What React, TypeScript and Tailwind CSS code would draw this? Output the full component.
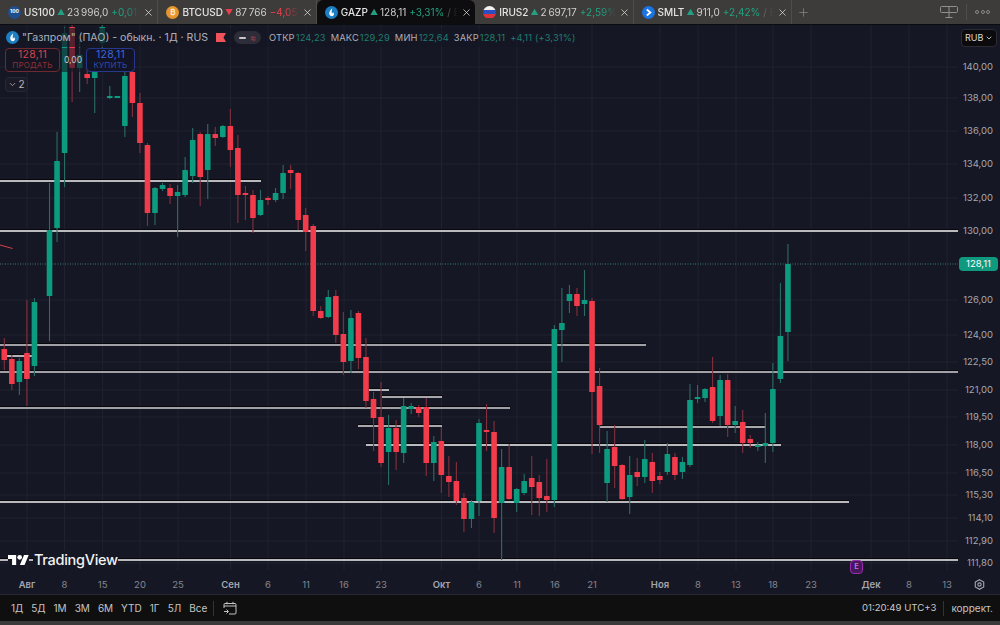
import { ChevronDown, Plus, X } from "lucide-react";

type Candle = [number, "g" | "r", number, number, number, number];

// k, colour, body top, body bottom, wick top, wick bottom (page pixels)
const candles: Candle[] = [
  [0, "r", 349, 360, 338, 370], [1, "r", 359, 384, 355, 390], [2, "g", 361, 382, 358, 395], [3, "r", 353, 379, 300, 406],
  [4, "g", 302, 366, 298, 376], [6, "g", 230, 296, 183, 341], [7, "g", 161, 228, 132, 242], [8, "g", 33, 153, 27, 187],
  [9, "r", 27, 68, 25, 102], [10, "g", 55, 68, 40, 92], [11, "r", 74, 78, 68, 84], [12, "g", 72, 78, 62, 113],
  [13, "g", 27, 43, 25, 50], [14, "g", 96, 97, 86, 99], [15, "g", 96, 97, 96, 98], [16, "g", 76, 126, 70, 137],
  [17, "r", 72, 103, 60, 117], [18, "r", 103, 143, 93, 153], [19, "r", 145, 213, 143, 226], [20, "g", 188, 213, 187, 225],
  [21, "g", 185, 189, 183, 191], [22, "r", 188, 196, 184, 204], [23, "g", 192, 196, 185, 237], [24, "g", 170, 195, 157, 197],
  [25, "g", 140, 176, 128, 183], [26, "r", 134, 177, 132, 206], [27, "g", 134, 170, 124, 199], [28, "r", 134, 138, 127, 146],
  [29, "g", 126, 137, 125, 138], [30, "r", 126, 150, 109, 167], [31, "r", 148, 195, 135, 223], [32, "r", 193, 195, 186, 220],
  [33, "r", 195, 218, 190, 233], [34, "g", 200, 215, 190, 216], [35, "r", 198, 200, 196, 205], [36, "g", 193, 200, 188, 202],
  [37, "g", 173, 193, 165, 199], [38, "r", 170, 173, 165, 189], [39, "r", 173, 220, 172, 230], [40, "r", 215, 232, 208, 251],
  [41, "r", 226, 311, 224, 316], [42, "r", 311, 318, 306, 319], [43, "g", 297, 317, 290, 318], [44, "r", 296, 335, 290, 343],
  [45, "r", 334, 362, 312, 375], [46, "g", 318, 361, 310, 373], [47, "r", 313, 358, 311, 369], [48, "r", 357, 401, 338, 408],
  [49, "r", 399, 418, 392, 451], [50, "r", 417, 463, 382, 467], [51, "g", 428, 452, 415, 485], [52, "r", 428, 452, 420, 470],
  [53, "g", 406, 453, 398, 463], [54, "g", 406, 409, 403, 414], [55, "r", 407, 413, 405, 417], [56, "r", 407, 463, 398, 476],
  [57, "g", 442, 463, 436, 481], [58, "r", 441, 475, 427, 493], [59, "r", 476, 482, 456, 497], [60, "r", 481, 501, 462, 505],
  [61, "r", 498, 519, 493, 532], [62, "g", 502, 519, 500, 528], [63, "g", 423, 501, 419, 516], [64, "r", 430, 431, 404, 451],
  [65, "r", 432, 518, 421, 533], [66, "g", 467, 503, 449, 560], [67, "r", 467, 499, 444, 500], [68, "g", 489, 503, 488, 512],
  [69, "g", 481, 493, 474, 495], [70, "r", 478, 487, 456, 515], [71, "r", 482, 498, 475, 516], [72, "r", 496, 500, 459, 512],
  [73, "g", 329, 500, 325, 507], [74, "g", 323, 330, 288, 362], [75, "g", 294, 301, 285, 313], [76, "r", 294, 306, 288, 316],
  [77, "g", 300, 304, 270, 316], [78, "r", 301, 392, 298, 454], [79, "r", 386, 425, 368, 453], [80, "g", 449, 483, 431, 502],
  [81, "r", 447, 466, 425, 488], [82, "r", 465, 499, 464, 500], [83, "g", 475, 497, 456, 514], [84, "r", 472, 477, 458, 486],
  [85, "g", 459, 477, 440, 483], [86, "r", 462, 481, 453, 493], [87, "r", 476, 480, 472, 484], [88, "g", 454, 472, 443, 475],
  [89, "r", 457, 475, 453, 480], [90, "g", 462, 472, 457, 479], [91, "g", 400, 465, 384, 467], [92, "g", 397, 399, 385, 403],
  [93, "g", 389, 398, 388, 402], [94, "r", 387, 421, 357, 423], [95, "g", 380, 416, 375, 426], [96, "r", 380, 425, 374, 437],
  [97, "g", 421, 425, 406, 433], [98, "r", 422, 443, 410, 453], [99, "r", 439, 443, 435, 448], [100, "g", 445, 446, 442, 451],
  [101, "g", 443, 446, 413, 463], [102, "g", 389, 443, 363, 452], [103, "g", 336, 379, 283, 383], [104, "g", 264, 332, 244, 361],
];

// y, x1, x2, colour of the drawn levels
const levels: [number, number, number, string][] = [
  [181, 0, 261, "#f0f0f0"], [231, 0, 958, "#f0f0f0"], [345, 0, 646, "#cfcfd2"], [356, 7, 32, "#cfcfd2"], [372, 0, 958, "#cfcfd2"],
  [390, 369, 389, "#cfcfd2"], [397, 382, 442, "#d8d8da"], [408, 0, 510, "#cfcfd2"], [426, 358, 442, "#d8d8da"], [427, 600, 766, "#d8d8da"],
  [445, 366, 781, "#f0f0f0"], [502, 0, 849, "#f0f0f0"], [560, 0, 958, "#f0f0f0"],
];

const prices: [string, number][] = [
  ["140,00", 67], ["138,00", 98], ["136,00", 131], ["134,00", 164], ["132,00", 198], ["130,00", 231], ["126,00", 300],
  ["124,00", 335], ["122,50", 362], ["121,00", 390], ["119,50", 417], ["118,00", 445], ["116,50", 473], ["115,30", 495],
  ["114,10", 518], ["112,90", 541], ["111,80", 563],
];

const dates: [string, number, boolean][] = [
  ["Авг", 27, true], ["8", 64.5, false], ["15", 102.7, false], ["20", 140, false], ["25", 178, false], ["Сен", 230.5, true],
  ["6", 268, false], ["11", 306, false], ["16", 344, false], ["23", 381, false], ["Окт", 441.5, true], ["6", 479, false],
  ["11", 517, false], ["16", 555, false], ["21", 592, false], ["Ноя", 660, true], ["8", 698, false], ["13", 736, false],
  ["18", 773, false], ["23", 811, false], ["Дек", 871, true], ["8", 909, false], ["13", 947, false],
];

const tabs = [
  { sym: "US100", up: true, price: "23\u2009996,0", pct: "+0,01%", tail: "", icon: "us" },
  { sym: "BTCUSD", up: false, price: "87\u2009766", pct: "−4,05%", tail: "", icon: "btc" },
  { sym: "GAZP", up: true, price: "128,11", pct: "+3,31%", tail: " / Б", icon: "gaz", active: true },
  { sym: "IRUS2", up: true, price: "2\u2009697,17", pct: "+2,59%", tail: "", icon: "ru" },
  { sym: "SMLT", up: true, price: "911,0", pct: "+2,42%", tail: " / Бе", icon: "smlt" },
];

const ranges = ["1Д", "5Д", "1М", "3М", "6М", "YTD", "1Г", "5Л", "Все"];

function GazIcon({ size = 13 }: { size?: number }) {
  return (
    <svg width={size} height={size} viewBox="0 0 14 14" className="shrink-0">
      <circle cx="7" cy="7" r="7" fill="#1c7fc4" />
      <path d="M7.8 2.5C5.6 4.6 4.4 6.6 4.6 8.4c.2 1.6 1.4 2.6 2.7 2.6 1.4 0 2.4-1 2.4-2.3 0-.9-.5-1.5-1.1-2-.2.7-.6 1.2-1.2 1.4-.5-1.500 0-3.400 .4-5.600z" fill="#fff" />
    </svg>
  );
}

function TabIcon({ kind }: { kind: string }) {
  if (kind === "gaz") return <GazIcon />;
  if (kind === "us")
    return (
      <span className="flex h-[13px] w-[13px] shrink-0 items-center justify-center rounded-full bg-[#1f4e8c] text-[5px] font-bold text-white">
        100
      </span>
    );
  if (kind === "btc")
    return (
      <span className="flex h-[13px] w-[13px] shrink-0 items-center justify-center rounded-full bg-[#e8952c] text-[8px] font-bold text-[#fbe7c8]">
        ₿
      </span>
    );
  if (kind === "ru")
    return (
      <span className="flex h-[13px] w-[13px] shrink-0 flex-col overflow-hidden rounded-full">
        <span className="flex-1 bg-[#f2f2f2]" />
        <span className="flex-1 bg-[#2b4fc0]" />
        <span className="flex-1 bg-[#e0323c]" />
      </span>
    );
  return (
    <svg width="13" height="13" viewBox="0 0 14 14" className="shrink-0">
      <circle cx="7" cy="7" r="7" fill="#1b74e4" />
      <path d="M5.200 3.800 9 7l-3.800 3.200" fill="none" stroke="#fff" strokeWidth="2" />
    </svg>
  );
}

function Tab({ t }: { t: (typeof tabs)[number] }) {
  return (
    <div
      className={`flex h-full w-[158.400px] shrink-0 items-center gap-[3px] pl-2 pr-[3px] ${
        t.active ? "rounded-t-md bg-[#0d0d0f]" : "border-r border-[#4e4d4c]"
      }`}
    >
      <TabIcon kind={t.icon} />
      <div className="flex min-w-0 flex-1 items-center overflow-hidden whitespace-nowrap text-[10px] [mask-image:linear-gradient(to_right,black_88%,transparent)]">
        <span className="mr-[2px] font-medium text-[#e4e4e4]">{t.sym}</span>
        <span className={`mr-[2px] text-[8px] ${t.up ? "text-[#22a081]" : "text-[#e8404e]"}`}>{t.up ? "▲" : "▼"}</span>
        <span className="mr-[3px] text-[#cfcfcf]">{t.price}</span>
        <span className={t.up ? "text-[#22a081]" : "text-[#e8404e]"}>{t.pct}</span>
        <span className="whitespace-pre text-[#777]">{t.tail}</span>
      </div>
      <X size={11} strokeWidth={1.6} className="shrink-0 text-[#e2e2e2]" />
    </div>
  );
}

function TvLogo() {
  return (
    <div className="absolute left-[8px] top-[526px] flex items-center gap-[4px]">
      <svg width="21" height="10.500" viewBox="0 4 36 18" fill="#fff" className="shrink-0 bg-[#161724]">
        <path d="M14 22H7V11H0V4h14v18zM28 22h-8l7.500-18h8L28 22z" />
        <circle cx="20" cy="8" r="4" />
      </svg>
      <span className="bg-[#161724] pl-[1px] text-[14.500px] leading-[18px] font-medium tracking-[-0.3px] text-[#f2f2f2]">
        TradingView
      </span>
    </div>
  );
}

function Chart() {
  return (
    <svg width="958" height="545" viewBox="0 25 958 545" className="block">
      {prices.map(([p, y]) => (
        <line key={p} x1="0" x2="958" y1={y} y2={y} stroke="#20222f" strokeWidth="1" />
      ))}
      {dates.map(([d, x]) => (
        <line key={x} x1={x} x2={x} y1="25" y2="570" stroke="#20222f" strokeWidth="1" />
      ))}
      <line x1="0" x2="958" y1="264" y2="264" stroke="#3f7a70" strokeWidth="1" strokeDasharray="1 1.500" />
      <path d="M0 245 12.500 248.500" stroke="#d8404a" strokeWidth="1" />
      {levels.map(([y, x1, x2, color]) => (
        <g key={`${y}-${x1}`}>
          <line x1={x1} x2={x2} y1={y - 1.500} y2={y - 1.500} stroke="#08080c" strokeWidth="1" />
          <line x1={x1} x2={x2} y1={y} y2={y} stroke={color} strokeWidth="1.700" />
        </g>
      ))}
      {candles.map(([k, c, top, bot, wt, wb]) => {
        const x = 4.3 + 7.535 * k;
        const fill = c === "g" ? "#0d9b80" : "#f23c4c";
        const wick = c === "g" ? "#2b6d66" : "#82303d";
        return (
          <g key={k}>
            <line x1={x} x2={x} y1={wt} y2={wb} stroke={wick} strokeWidth="1.100" />
            <rect x={x - 2.800} y={top} width="5.600" height={Math.max(bot - top, 2)} rx="0.500" fill={fill} />
          </g>
        );
      })}
    </svg>
  );
}

function Legend() {
  return (
    <div className="absolute left-[6px] top-[3px] flex flex-col items-start">
      <div className="flex h-[19px] items-center bg-[#161724]/70 pr-1 whitespace-nowrap">
        <GazIcon />
        <span className="ml-[3px] text-[10.600px] text-[#aeb0b8]">"Газпром" (ПАО) - обыкн. · 1Д · RUS</span>
        <svg width="10" height="9" viewBox="0 0 10 9" className="ml-2 shrink-0">
          <path d="M0 0h10L7.500 4.500 10 9H0z" fill="#f0525a" />
        </svg>
        <span className="ml-2 flex h-[13px] w-[27px] items-center justify-center gap-[4px] rounded-full bg-[#2c2d38]">
          <span className="h-[2px] w-[7px] rounded bg-[#c8c8cc]" />
          <span className="text-[9px] leading-none text-[#b03a48]">≈</span>
        </span>
        <div className="ml-[8px] flex items-center gap-[5px] text-[9.300px] tracking-[0.15px]">
          {[["ОТКР", "124,23"], ["МАКС", "129,29"], ["МИН", "122,64"], ["ЗАКР", "128,11"]].map(([a, b]) => (
            <span key={a} className="flex gap-[1px]">
              <span className="text-[#aeb0b8]">{a}</span>
              <span className="text-[#1f7d6e]">{b}</span>
            </span>
          ))}
          <span className="text-[#1f7d6e]">+4,11 (+3,31%)</span>
        </div>
      </div>
      <div className="mt-[1px] -ml-[1px] flex items-center">
        <div className="flex h-[24px] w-[55px] flex-col items-center justify-center rounded border border-[#6e2a30] bg-[#17141f]/80 leading-[10px]">
          <span className="text-[10.500px] tracking-[0.2px] text-[#d0454f]">128,11</span>
          <span className="text-[8px] tracking-[0.2px] text-[#8e3038]">ПРОДАТЬ</span>
        </div>
        <span className="flex h-[24px] w-[26px] items-center justify-center bg-[#161724]/60 text-[8.500px] text-[#c4c4c8]">0,00</span>
        <div className="flex h-[24px] w-[49px] flex-col items-center justify-center rounded border border-[#27398c] bg-[#121426]/90 leading-[10px]">
          <span className="text-[10.500px] tracking-[0.2px] text-[#3f63d8]">128,11</span>
          <span className="text-[8px] tracking-[0.2px] text-[#2f4aa8]">КУПИТЬ</span>
        </div>
      </div>
      <div className="mt-[5px] -ml-[1px] flex h-[15px] w-[23px] items-center justify-center gap-[1px] rounded-sm border border-[#262834] bg-[#1a1b27] text-[10px] text-[#b8b8bc]">
        <ChevronDown size={9} strokeWidth={2} />
        2
      </div>
    </div>
  );
}

export default function App() {
  return (
    <div className="flex h-[625px] w-[1000px] flex-col overflow-hidden bg-[#161724] font-['Inter',sans-serif]">
      <div className="flex h-[24px] shrink-0 items-center bg-[#3d3c3b]">
        {tabs.map((t) => (
          <Tab key={t.sym} t={t} />
        ))}
        <Plus size={13} strokeWidth={1.300} className="ml-[5px] text-[#8a8a8a]" />
        <div className="ml-auto flex items-center">
          <svg width="18" height="12" viewBox="0 0 18 12" fill="none" stroke="#8f8f8f" strokeWidth="1">
            <rect x="0.500" y="0.500" width="17" height="6" rx="1" />
            <path d="M9 0v11M5.500 11.500h7" />
          </svg>
          <span className="mx-[8px] h-[16px] w-px bg-[#4e4d4c]" />
          <span className="mr-[10px] flex gap-[1.500px]">
            <span className="h-[4px] w-[4px] rounded-full border border-[#8a8a8a]" />
            <span className="h-[4px] w-[4px] rounded-full border border-[#8a8a8a]" />
            <span className="h-[4px] w-[4px] rounded-full border border-[#8a8a8a]" />
          </span>
        </div>
      </div>
      <div className="h-px shrink-0 bg-[#0c0c0e]" />

      <div className="relative flex h-[545px] shrink-0">
        <div className="relative h-full w-[958px] shrink-0">
          <Chart />
          <TvLogo />
          <Legend />
          <span className="absolute left-[850px] top-[535px] z-10 flex h-[14px] w-[13px] items-center justify-center rounded-sm border border-[#9c2bb0] bg-[#43195a] text-[7.500px] font-semibold text-[#d070e0]">
            E
          </span>
        </div>
        <div className="relative h-full flex-1 text-[9.500px] text-[#a6a8b0]">
          {prices.map(([p, y]) => (
            <span key={p} className="absolute right-[7px] leading-none" style={{ top: y - 25 - 5 }}>
              {p}
            </span>
          ))}
          <span className="absolute right-[2px] top-[232px] flex h-[14px] w-[39px] items-center justify-center rounded-sm bg-[#0f9a80] text-[9.500px] text-white">
            128,11
          </span>
          <div className="absolute right-[3px] top-[4px] flex h-[18px] w-[36px] items-center justify-between rounded border border-[#2b2c33] bg-[#0b0b0d] px-[3px] text-[9px] text-[#dcdcdc]">
            RUB
            <ChevronDown size={8} strokeWidth={2.500} />
          </div>
        </div>
      </div>

      <div className="relative h-[25px] shrink-0 border-b border-[#262836] text-[9.500px] text-[#85878f]">
        {dates.map(([d, x, bold]) => (
          <span
            key={`${d}-${x}`}
            className={`absolute top-[10px] -translate-x-1/2 leading-none ${bold ? "font-semibold text-[#a4a6ae]" : ""}`}
            style={{ left: x }}
          >
            {d}
          </span>
        ))}
        <svg width="11" height="11" viewBox="0 0 12 12" fill="none" stroke="#a6a8b0" strokeWidth="1.200" className="absolute left-[974px] top-[9px]">
          <path d="M6 .8 10.600 3.400v5.200L6 11.200 1.400 8.600V3.400z" />
          <circle cx="6" cy="6" r="1.800" />
        </svg>
      </div>

      <div className="flex h-[26px] shrink-0 items-center bg-[#0f0f10] pl-[11px] pr-[7px] text-[10px] text-[#c4c4c4]">
        <div className="flex gap-[8px]">
          {ranges.map((r) => (
            <span key={r}>{r}</span>
          ))}
        </div>
        <span className="ml-[6px] h-[15px] w-px bg-[#333]" />
        <svg width="14" height="14" viewBox="0 0 14 14" fill="none" stroke="#c4c4c4" strokeWidth="1" className="ml-[9px]">
          <path d="M1 7V3.500a1 1 0 0 1 1-1h10a1 1 0 0 1 1 1v8.500a1 1 0 0 1-1 1H6M1 5h12M4 .8v2.500M10 .8v2.500M1 10.500h4M3.500 8.500l2 2-2 2" />
        </svg>
        <span className="ml-auto text-[9.600px] text-[#c8c8c8]">01:20:49 UTC+3</span>
        <span className="mx-[7px] h-[15px] w-px bg-[#333]" />
        <span>коррект.</span>
      </div>
      <div className="flex-1 bg-[#3a3a3a]" />
    </div>
  );
}
